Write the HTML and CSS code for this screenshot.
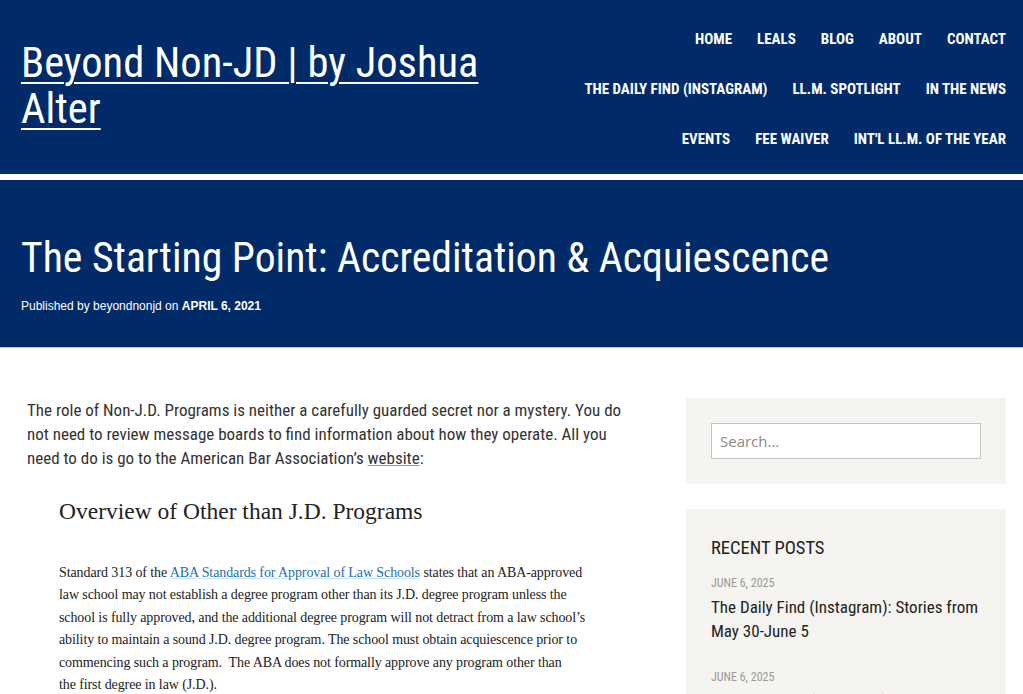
FILE: index.html
```html
<!DOCTYPE html>
<html lang="en">
<head>
  <meta charset="UTF-8">
  <title>The Starting Point: Accreditation &amp; Acquiescence – Beyond Non-JD</title>
  <link rel="stylesheet" href="styles.css">
</head>
<body>
  <!-- header -->
  <header class="site-header">
    <a class="site-title" href="#">Beyond Non-JD | by Joshua Alter</a>
    <nav class="main-nav">
      <ul>
        <li><a href="#">Home</a></li>
        <li><a href="#">LEALS</a></li>
        <li><a href="#">Blog</a></li>
        <li><a href="#">About</a></li>
        <li><a href="#">Contact</a></li>
      </ul>
      <ul>
        <li><a href="#">The Daily Find (Instagram)</a></li>
        <li><a href="#">LL.M. Spotlight</a></li>
        <li><a href="#">In the News</a></li>
      </ul>
      <ul>
        <li><a href="#">Events</a></li>
        <li><a href="#">Fee Waiver</a></li>
        <li><a href="#">Int'l LL.M. of the Year</a></li>
      </ul>
    </nav>
  </header>

  <!-- post title -->
  <section class="hero">
    <h1 class="entry-title">The Starting Point: Accreditation &amp; Acquiescence</h1>
    <p class="entry-meta">Published by <a href="#">beyondnonjd</a> on <span class="date">April 6, 2021</span></p>
  </section>

  <div class="site-content">
    <main class="entry-content">
      <p>The role of Non-J.D. Programs is neither a carefully guarded secret nor a mystery. You do not need to review message boards to find information about how they operate. All you need to do is go to the American Bar Association’s <a href="#">website</a>:</p>

      <blockquote>
        <h2>Overview of Other than J.D. Programs</h2>
        <p>Standard 313 of the <a href="#">ABA Standards for Approval of Law Schools</a> states that an <span class="nowrap">ABA-approved</span> law school may not establish a degree program other than its J.D. degree program unless the school is fully approved, and the additional degree program will not detract from a law school’s ability to maintain a sound J.D. degree program. The school must obtain acquiescence prior to commencing such a program.&nbsp; The ABA does not formally approve any program other than the&nbsp;first degree in law (J.D.).</p>
      </blockquote>
    </main>

    <aside class="sidebar">
      <div class="widget">
        <input class="search-field" type="search" placeholder="Search…">
      </div>
      <div class="widget">
        <h3 class="widget-title">Recent Posts</h3>
        <ul class="recent-posts">
          <li>
            <span class="post-date">June 6, 2025</span>
            <a href="#">The Daily Find (Instagram): Stories from May 30-June 5</a>
          </li>
          <li>
            <span class="post-date">June 6, 2025</span>
            <a href="#">The Daily Find (Instagram): Stories from May 23-29</a>
          </li>
        </ul>
      </div>
    </aside>
  </div>
</body>
</html>
```

FILE: styles.css
```css
/* base */
body {
  margin: 0;
  font-family: "Roboto Condensed", "Liberation Sans", Arial, sans-serif;
  color: #333;
  background: #fff;
}
a {
  color: inherit;
}
ul {
  list-style: none;
  margin: 0;
  padding: 0;
}
.nowrap {
  white-space: nowrap;
}

/* header */
.site-header {
  background-color: #002a68;
  height: 174px;
  border-bottom: 6px solid #fff;
  box-shadow: 0 1px 0 #b9c2d3;
  display: flex;
  justify-content: space-between;
  align-items: center;
  padding: 0 17px 0 21px;
}
.site-title {
  font-size: 42.5px;
  line-height: 46px;
  color: #fff;
  width: 480px;
  margin-top: -2px;
  text-decoration-thickness: 2px;
  text-underline-offset: 5px;
}
.main-nav {
  margin-top: 2px;
}
.main-nav ul {
  display: flex;
  justify-content: flex-end;
  gap: 25px;
  height: 50px;
  align-items: center;
}
.main-nav a {
  color: #fff;
  text-decoration: none;
  text-transform: uppercase;
  font-weight: bold;
  font-size: 15px;
}

/* post title */
.hero {
  background-color: #002a68;
  height: 167px;
  padding: 0 21px;
  border-bottom: 1px solid #b9c2d3;
  display: flex;
  flex-direction: column;
  justify-content: center;
}
.entry-title {
  margin: 0;
  color: #fff;
  font-weight: normal;
  font-size: 41.7px;
  line-height: 50px;
  padding-top: 18px;
}
.entry-meta {
  margin: 16px 0 0;
  color: #fff;
  font-family: "Liberation Sans", Arial, sans-serif;
  font-size: 12px;
}
.entry-meta a {
  text-decoration: none;
}
.entry-meta .date {
  text-transform: uppercase;
  font-weight: bold;
}

/* content */
.site-content {
  display: flex;
  gap: 50px;
  padding: 50px 17px 0 27px;
}
.entry-content {
  flex: 1;
}
.entry-content > p {
  margin: 0;
  font-size: 17px;
  line-height: 24px;
}
.entry-content > p a {
  text-decoration-color: #999;
}
blockquote {
  margin: 26px 0 0 32px;
  padding: 0;
  font-family: "Liberation Serif", "Times New Roman", serif;
  color: #222;
}
blockquote h2 {
  margin: 0 0 36px;
  font-weight: normal;
  font-size: 23.5px;
  line-height: 30px;
}
blockquote p {
  margin: 0;
  font-size: 14px;
  line-height: 22.4px;
  letter-spacing: -0.1px;
  width: 545px;
}
blockquote a {
  color: #1a6fb0;
  text-decoration-color: #d6e4f0;
}

/* sidebar */
.sidebar {
  width: 320px;
  display: flex;
  flex-direction: column;
  gap: 25px;
}
.widget {
  background-color: #f6f4f0;
  padding: 25px;
}
.search-field {
  display: block;
  width: 100%;
  height: 36px;
  box-sizing: border-box;
  border: 1px solid #c4c4c4;
  padding: 0 8px;
  font-family: "Open Sans", Arial, sans-serif;
  font-size: 15px;
  color: #333;
}
.search-field::placeholder {
  color: #8a8a8a;
}
.widget-title {
  margin: 3px 0 17px;
  font-weight: normal;
  text-transform: uppercase;
  font-size: 18.5px;
  color: #222;
}
.recent-posts li {
  margin-bottom: 27px;
}
.post-date {
  display: block;
  color: #999;
  font-size: 12px;
  text-transform: uppercase;
  margin-bottom: 5px;
}
.recent-posts a {
  text-decoration: none;
  color: #222;
  font-size: 17px;
  line-height: 24px;
}
```
